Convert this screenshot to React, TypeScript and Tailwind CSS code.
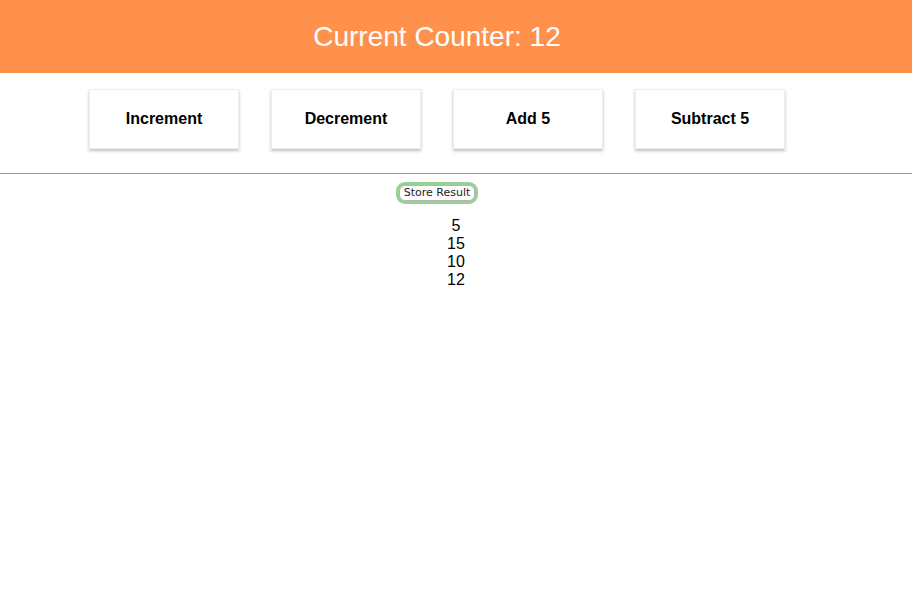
import React, { useState } from "react";

const ops = [
  { label: "Increment", delta: 1 },
  { label: "Decrement", delta: -1 },
  { label: "Add 5", delta: 5 },
  { label: "Subtract 5", delta: -5 },
];

export default function App() {
  const [counter, setCounter] = useState<number>(12);
  const [results, setResults] = useState<number[]>([5, 15, 10, 12]);

  return (
    <div className="min-h-screen bg-white font-['Liberation_Sans',Arial,sans-serif] text-black">
      <div className="h-[73px] w-full bg-[#ff914d] flex items-center">
        <h1 className="w-[874px] text-center text-[28px] text-white">
          Current Counter: {counter}
        </h1>
      </div>

      <div className="w-[874px] flex justify-center gap-8 pt-[16px] pb-6">
        {ops.map((op) => (
          <button
            key={op.label}
            onClick={() => setCounter((c) => c + op.delta)}
            className="w-[150px] h-[60px] bg-white border border-[#eeeeee] shadow-[0_2px_3px_rgba(0,0,0,0.25)] font-bold text-base"
          >
            {op.label}
          </button>
        ))}
      </div>

      <hr className="border-t border-[#9a9a9a]" />

      <div className="w-[874px] flex justify-center pt-[11px]">
        <button
          onClick={() => setResults((r) => [...r, counter])}
          className="rounded-[6px] ring-[3px] ring-[#97d197] border border-[#b5b5b5] bg-white px-[4px] h-[16px] leading-[14px] text-[11px] font-['DejaVu_Sans',sans-serif] text-[#222]"
        >
          Store Result
        </button>
      </div>

      <ul className="mt-[16px] text-center text-base leading-[18px]">
        {results.map((r, i) => (
          <li key={i}>{r}</li>
        ))}
      </ul>
    </div>
  );
}
